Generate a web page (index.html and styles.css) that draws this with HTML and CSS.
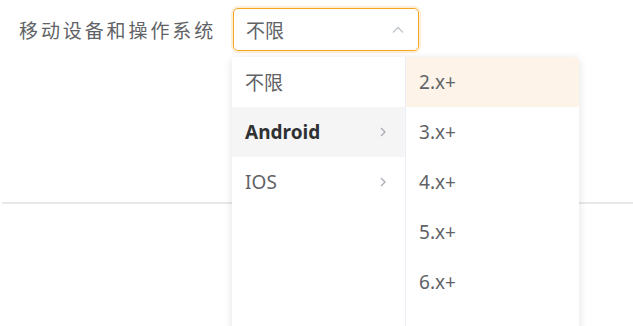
FILE: index.html
```html
<!DOCTYPE html>
<html lang="zh-CN">
<head>
    <meta charset="UTF-8">
    <meta name="viewport" content="width=device-width, initial-scale=1.0">
    <title>移动设备和操作系统</title>
    <link rel="stylesheet" href="styles.css">
</head>
<body>
    <div class="page">
        <div class="form-row">
            <label class="form-label">移动设备和操作系统</label>
            <div class="select">
                <div class="select-input">
                    <span>不限</span>
                    <svg class="select-arrow" width="12" height="8" viewBox="0 0 12 8">
                        <path d="M1 6.5 L6 1.5 L11 6.5" fill="none" stroke="#c0c4cc" stroke-width="1.3"/>
                    </svg>
                </div>
                <div class="cascader">
                    <ul class="cascader-menu">
                        <li class="cascader-item">不限</li>
                        <li class="cascader-item active">Android
                            <svg class="item-arrow" width="8" height="12" viewBox="0 0 8 12">
                                <path d="M2 2 L6 6 L2 10" fill="none" stroke="#a8abb2" stroke-width="1.3"/>
                            </svg>
                        </li>
                        <li class="cascader-item">IOS
                            <svg class="item-arrow" width="8" height="12" viewBox="0 0 8 12">
                                <path d="M2 2 L6 6 L2 10" fill="none" stroke="#a8abb2" stroke-width="1.3"/>
                            </svg>
                        </li>
                    </ul>
                    <ul class="cascader-menu">
                        <li class="cascader-item hover">2.x+</li>
                        <li class="cascader-item">3.x+</li>
                        <li class="cascader-item">4.x+</li>
                        <li class="cascader-item">5.x+</li>
                        <li class="cascader-item">6.x+</li>
                    </ul>
                </div>
            </div>
        </div>
        <div class="divider"></div>
    </div>
</body>
</html>
```

FILE: styles.css
```css
html, body {
    margin: 0;
    height: 100%;
    overflow: hidden;
}
body {
    background: #fff;
    font-family: 'Noto Sans', 'Noto Sans CJK SC', sans-serif;
    font-size: 19px;
    color: #606266;
}
.page {
    height: 326px;
    overflow: hidden;
}
.form-row {
    display: flex;
    align-items: center;
    padding: 8px 0 0 19px;
}
.form-label {
    letter-spacing: 2.9px;
    margin-right: 17px;
}
.select {
    position: relative;
    z-index: 2;
}
.select-input {
    box-sizing: border-box;
    width: 186px;
    height: 43px;
    border: 1.5px solid #f5a623;
    border-radius: 5px;
    box-shadow: 0 0 0 2px rgba(245, 166, 35, 0.18);
    padding: 0 14px 0 12px;
    display: flex;
    align-items: center;
    justify-content: space-between;
}
.cascader {
    position: absolute;
    top: 49px;
    left: -1px;
    display: flex;
    background: #fff;
    border-radius: 4px;
    box-shadow: 0 2px 10px rgba(0, 0, 0, 0.12);
}
.cascader-menu {
    list-style: none;
    margin: 0;
    padding: 0;
    width: 173px;
    height: 280px;
}
.cascader-menu + .cascader-menu {
    border-left: 1px solid #ebeef5;
}
.cascader-item {
    height: 50px;
    padding: 0 18px 0 13px;
    display: flex;
    align-items: center;
    justify-content: space-between;
}
.cascader-item.active {
    background: #f5f5f5;
    color: #303133;
    font-weight: 700;
}
.cascader-item.hover {
    background: #fdf3e8;
    border-top-right-radius: 4px;
}
.divider {
    margin: 151px 0 0 2px;
    border-top: 2px solid #e8e8e8;
}
```
